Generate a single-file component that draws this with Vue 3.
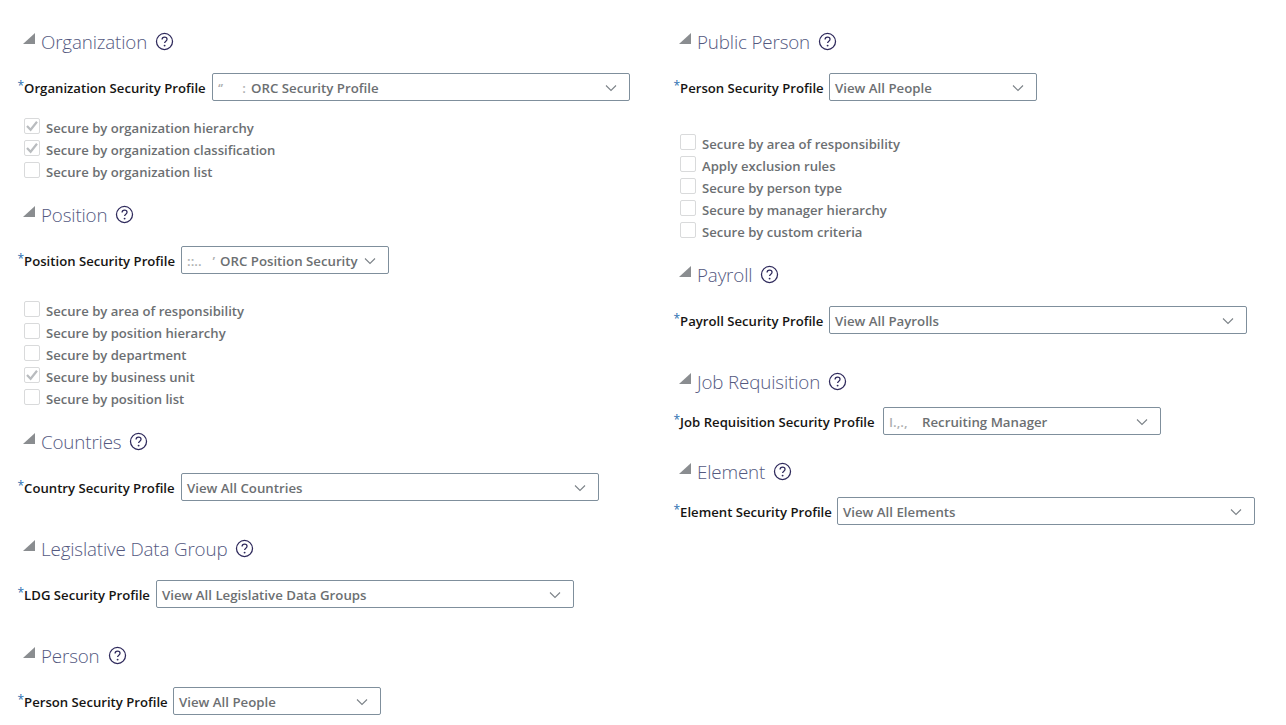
<script setup>
const left = [
  { title: 'Organization', label: 'Organization Security Profile', labelWidth: 195, width: 418, mark: ['‘’', ':'], value: 'ORC Security Profile', cls: 'first',
    checks: [['Secure by organization hierarchy', true], ['Secure by organization classification', true], ['Secure by organization list', false]], checksCls: 'near' },
  { title: 'Position', label: 'Position Security Profile', labelWidth: 164, width: 208, mark: ['::..', '’'], value: 'ORC Position Security', cls: 'near',
    checks: [['Secure by area of responsibility', false], ['Secure by position hierarchy', false], ['Secure by department', false], ['Secure by business unit', true], ['Secure by position list', false]], checksCls: 'far' },
  { title: 'Countries', label: 'Country Security Profile', labelWidth: 164, width: 418, value: 'View All Countries', cls: 'near', checks: [] },
  { title: 'Legislative Data Group', label: 'LDG Security Profile', labelWidth: 139, width: 418, value: 'View All Legislative Data Groups', cls: 'wide', checks: [] },
  { title: 'Person', label: 'Person Security Profile', labelWidth: 156, width: 208, value: 'View All People', cls: 'wide', checks: [] }
]
const right = [
  { title: 'Public Person', label: 'Person Security Profile', labelWidth: 156, width: 208, value: 'View All People', cls: 'first',
    checks: [['Secure by area of responsibility', false], ['Apply exclusion rules', false], ['Secure by person type', false], ['Secure by manager hierarchy', false], ['Secure by custom criteria', false]], checksCls: 'farther' },
  { title: 'Payroll', label: 'Payroll Security Profile', labelWidth: 156, width: 418, value: 'View All Payrolls', cls: 'near', checks: [] },
  { title: 'Job Requisition', label: 'Job Requisition Security Profile', labelWidth: 210, width: 278, mark: ['I.,.,', ''], value: 'Recruiting Manager', cls: 'wide', tight: true, checks: [] },
  { title: 'Element', label: 'Element Security Profile', labelWidth: 164, width: 418, value: 'View All Elements', cls: 'mid', tight: true, checks: [] }
]
const columns = [left, right]
</script>

<template>
  <div class="page">
    <div v-for="(col, c) in columns" :key="c" class="column">
      <section v-for="s in col" :key="s.title" class="section" :class="s.cls">
        <h2 class="heading">
          <span class="tri"></span>
          <span class="title">{{ s.title }}</span>
          <svg class="help" width="19" height="19" viewBox="0 0 18 18" fill="none">
            <circle cx="9" cy="9" r="7.6" stroke="#2f2a5c" stroke-width="1.2" />
            <path d="M6.7 7.1c0-1.3 1-2.2 2.4-2.2 1.3 0 2.3.8 2.3 2 0 1.8-2.3 1.8-2.3 3.6" stroke="#2f2a5c" stroke-width="1.2" />
            <circle cx="9.1" cy="12.9" r=".9" fill="#2f2a5c" />
          </svg>
        </h2>
        <div class="field" :class="{ tight: s.tight }">
          <label class="label" :style="{ width: s.labelWidth + 'px' }"><span class="star">*</span>{{ s.label }}</label>
          <div class="select" :style="{ width: s.width + 'px' }">
            <span v-if="s.mark" class="mark"><span>{{ s.mark[0] }}</span><span>{{ s.mark[1] }}</span></span>
            <span class="value">{{ s.value }}</span>
            <svg class="chev" width="12" height="8" viewBox="0 0 12 8" fill="none">
              <path d="M1 1.5l5 5 5-5" stroke="#7c8288" stroke-width="1.1" />
            </svg>
          </div>
        </div>
        <div v-if="s.checks.length" class="checks" :class="s.checksCls">
          <div v-for="[text, on] in s.checks" :key="text" class="check">
            <span class="box">
              <svg v-if="on" width="14" height="14" viewBox="0 0 14 14" fill="none">
                <path d="M2 7l3.6 3.8L12 2.8" stroke="#b9bcbf" stroke-width="2.2" />
              </svg>
            </span>
            <span class="check-text">{{ text }}</span>
          </div>
        </div>
      </section>
    </div>
  </div>
</template>

<style>
html, body { background: #fff; }
</style>

<style scoped>
.page {
  display: grid;
  grid-template-columns: 656px 1fr;
  padding-left: 17px;
  width: 1286px;
  height: 725px;
  box-sizing: border-box;
  overflow: hidden;
  background: #fff;
  font-family: "Open Sans", "Noto Sans", sans-serif;
}
.section.first { padding-top: 27px; }
.section.near { padding-top: 17px; }
.section.mid { padding-top: 22px; }
.section.wide { padding-top: 33px; }
.heading {
  display: flex;
  align-items: center;
  height: 30px;
  margin: 0;
  padding-left: 6px;
  font-weight: 300;
}
.tri {
  width: 0;
  height: 0;
  border-left: 12px solid transparent;
  border-bottom: 11px solid #8a8d90;
  margin-right: 6px;
  margin-top: -7px;
}
.title {
  font-size: 18.8px;
  line-height: 28px;
  margin-top: -1px;
  color: #54597f;
  font-weight: 300;
  letter-spacing: -0.15px;
}
.help { margin-left: 8px; margin-top: -2px; }
.field {
  display: flex;
  align-items: center;
  margin-top: 16px;
  height: 28px;
}
.field.tight { margin-top: 10px; }
.label {
  flex: none;
  box-sizing: border-box;
  font-size: 13.15px;
  font-weight: 600;
  color: #161513;
  padding-left: 0.5px;
  white-space: nowrap;
}
.star { color: #2a6fb0; font-size: 12px; font-weight: 500; vertical-align: 3px; }
.select {
  display: flex;
  align-items: center;
  box-sizing: border-box;
  height: 28px;
  border: 1px solid #7f8f9c;
  border-radius: 2px;
  padding: 1px 5px 0;
  font-size: 13.25px;
  font-weight: 600;
  color: #6c6f72;
  position: relative;
}
.mark {
  flex: none;
  display: flex;
  justify-content: space-between;
  box-sizing: border-box;
  width: 33px;
  padding-right: 5px;
  white-space: nowrap;
  opacity: 0.55;
}
.value { white-space: nowrap; }
.chev { position: absolute; right: 12px; top: 10px; }
.checks { margin-top: 16px; }
.checks.far { margin-top: 26px; }
.checks.farther { margin-top: 32px; }
.check {
  display: flex;
  align-items: center;
  height: 22px;
  padding-left: 7px;
}
.box {
  flex: none;
  box-sizing: border-box;
  width: 16px;
  height: 16px;
  border: 1px solid #d9dadb;
  border-radius: 2px;
  margin-right: 6px;
  margin-bottom: 4px;
  display: flex;
  align-items: center;
  justify-content: center;
}
.check-text {
  font-size: 13.1px;
  font-weight: 600;
  color: #6c6f72;
  white-space: nowrap;
}
</style>
